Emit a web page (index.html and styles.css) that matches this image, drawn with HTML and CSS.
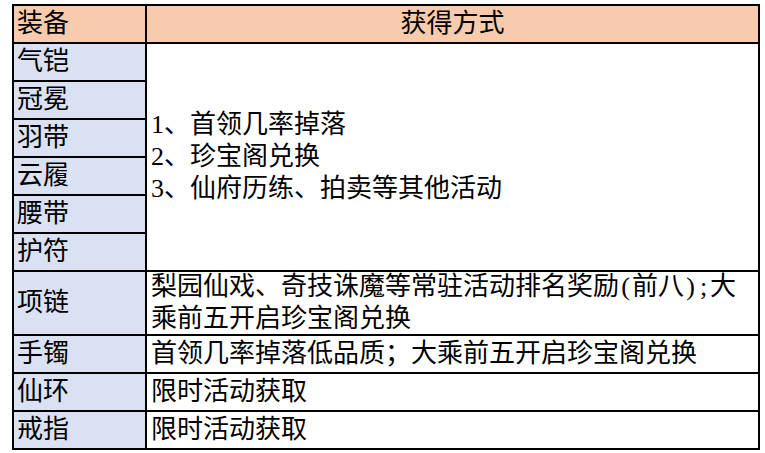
FILE: index.html
```html
<!DOCTYPE html>
<html lang="zh">
<head>
<meta charset="utf-8">
<title>装备获得方式</title>
<link rel="stylesheet" href="styles.css">
</head>
<body>
<div class="sheet">
  <div class="cell head name"><div>装备</div></div>
  <div class="cell head way"><div>获得方式</div></div>

  <div class="cell name"><div>气铠</div></div>
  <div class="cell way span6"><div>1、首领几率掉落<br>2、珍宝阁兑换<br>3、仙府历练、拍卖等其他活动</div></div>
  <div class="cell name"><div>冠冕</div></div>
  <div class="cell name"><div>羽带</div></div>
  <div class="cell name"><div>云履</div></div>
  <div class="cell name"><div>腰带</div></div>
  <div class="cell name"><div>护符</div></div>

  <div class="cell name"><div>项链</div></div>
  <div class="cell way"><div>梨园仙戏、奇技诛魔等常驻活动排名奖励<span class="half">(</span>前八<span class="half">)</span><span class="half">;</span>大<br>乘前五开启珍宝阁兑换</div></div>

  <div class="cell name"><div>手镯</div></div>
  <div class="cell way"><div>首领几率掉落低品质；大乘前五开启珍宝阁兑换</div></div>

  <div class="cell name"><div>仙环</div></div>
  <div class="cell way"><div>限时活动获取</div></div>

  <div class="cell name"><div>戒指</div></div>
  <div class="cell way"><div>限时活动获取</div></div>
</div>
</body>
</html>
```

FILE: styles.css
```css
html, body {
  margin: 0;
  padding: 0;
  background: #ffffff;
}

body {
  font-family: "Liberation Serif", "Noto Sans CJK SC", serif;
  font-size: 26px;
  color: #000000;
}

.sheet {
  display: grid;
  grid-template-columns: 131px 611px;
  grid-template-rows: 36px repeat(6, 36px) 62px 36px 36px 36px;
  gap: 2px;
  padding: 2px;
  background: #000000;
  width: 744px;
  margin: 4px 0 0 12px;
}

.cell {
  display: flex;
  align-items: center;
  line-height: 32px;
  white-space: nowrap;
  overflow: hidden;
}

.name {
  background: #d9e1f2;
  padding-left: 3px;
}

.way {
  background: #ffffff;
  padding-left: 4px;
}

.head {
  background: #f8cbad;
}

.head.way {
  justify-content: center;
  padding-left: 0;
}

.span6 {
  grid-column: 2;
  grid-row: 2 / span 6;
}

.half {
  display: inline-block;
  width: 13px;
  text-align: center;
}
```
